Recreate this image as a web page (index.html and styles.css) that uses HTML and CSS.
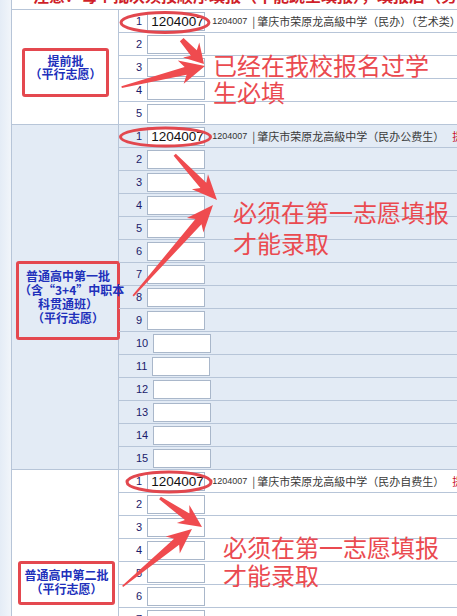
FILE: index.html
```html
<!DOCTYPE html>
<html lang="zh-CN">
<head>
<meta charset="utf-8">
<title>志愿填报</title>
<link rel="stylesheet" href="styles.css">
</head>
<body>
<div class="page">
  <div class="sheet">
    <div class="notice"><span class="notice-text">注意：每个批次须按顺序填报（不能跳空填报），填报后（务必点击保存）</span></div>

    <section class="batch">
      <div class="label"><div class="tag tag-1">提前批<br>（平行志愿）</div></div>
      <div class="rows">
        <div class="row"><span class="num">1</span><span class="box filled">1204007</span><span class="code">1204007</span><span class="school"><span class="bar">|</span>肇庆市荣原龙高級中学（民办）（艺术类）</span></div>
        <div class="row"><span class="num">2</span><span class="box"></span></div>
        <div class="row"><span class="num">3</span><span class="box"></span></div>
        <div class="row"><span class="num">4</span><span class="box"></span></div>
        <div class="row"><span class="num">5</span><span class="box"></span></div>
      </div>
    </section>

    <section class="batch batch-blue">
      <div class="label"><div class="tag tag-2">普通高中第一批<br>（含“3+4”中职本<br>科贯通班）<br>（平行志愿）</div></div>
      <div class="rows">
        <div class="row"><span class="num">1</span><span class="box filled">1204007</span><span class="code">1204007</span><span class="school"><span class="bar">|</span>肇庆市荣原龙高級中学（民办公费生）</span><span class="hint">提示</span></div>
        <div class="row"><span class="num">2</span><span class="box"></span></div>
        <div class="row"><span class="num">3</span><span class="box"></span></div>
        <div class="row"><span class="num">4</span><span class="box"></span></div>
        <div class="row"><span class="num">5</span><span class="box"></span></div>
        <div class="row"><span class="num">6</span><span class="box"></span></div>
        <div class="row"><span class="num">7</span><span class="box"></span></div>
        <div class="row"><span class="num">8</span><span class="box"></span></div>
        <div class="row"><span class="num">9</span><span class="box"></span></div>
        <div class="row"><span class="num">10</span><span class="box"></span></div>
        <div class="row"><span class="num">11</span><span class="box"></span></div>
        <div class="row"><span class="num">12</span><span class="box"></span></div>
        <div class="row"><span class="num">13</span><span class="box"></span></div>
        <div class="row"><span class="num">14</span><span class="box"></span></div>
        <div class="row"><span class="num">15</span><span class="box"></span></div>
      </div>
    </section>

    <section class="batch">
      <div class="label"><div class="tag tag-3">普通高中第二批<br>（平行志愿）</div></div>
      <div class="rows">
        <div class="row"><span class="num">1</span><span class="box filled">1204007</span><span class="code">1204007</span><span class="school"><span class="bar">|</span>肇庆市荣原龙高級中学（民办自费生）</span><span class="hint">提示</span></div>
        <div class="row"><span class="num">2</span><span class="box"></span></div>
        <div class="row"><span class="num">3</span><span class="box"></span></div>
        <div class="row"><span class="num">4</span><span class="box"></span></div>
        <div class="row"><span class="num">5</span><span class="box"></span></div>
        <div class="row"><span class="num">6</span><span class="box"></span></div>
        <div class="row"><span class="num">7</span><span class="box"></span></div>
        <div class="row"><span class="num">8</span><span class="box"></span></div>
        <div class="row"><span class="num">9</span><span class="box"></span></div>
        <div class="row"><span class="num">10</span><span class="box"></span></div>
      </div>
    </section>
  </div>

  <div class="note note-1">已经在我校报名过学<br>生必填</div>
  <div class="note note-2">必须在第一志愿填报<br>才能录取</div>
  <div class="note note-3">必须在第一志愿填报<br>才能录取</div>

  <svg class="marks" width="457" height="616" viewBox="0 0 457 616" xmlns="http://www.w3.org/2000/svg">
    <g fill="none" stroke="#e2474e" stroke-width="3">
      <ellipse cx="165" cy="22.5" rx="44" ry="10"/>
      <ellipse cx="165.5" cy="137" rx="45" ry="9"/>
      <ellipse cx="169" cy="482" rx="42" ry="10"/>
    </g>
    <g fill="#ef4b4f">
      <polygon transform="translate(204 64) rotate(47.5)" points="0,0 -19,-11 -15,-4 -33,-2.5 -33,2.5 -15,4 -19,11"/>
      <polygon transform="translate(205 66) rotate(-14.2)" points="0,0 -25,-12 -20,-4 -86,-1 -86,1 -20,4 -25,12"/>
      <polygon transform="translate(217 200) rotate(47)" points="0,0 -25,-11 -20,-4 -62,-1.5 -62,1.5 -20,4 -25,11"/>
      <polygon transform="translate(213 205) rotate(-48.7)" points="0,0 -27,-11 -22,-4 -121,-0.8 -121,0.8 -22,4 -27,11"/>
      <polygon transform="translate(202 527) rotate(34.6)" points="0,0 -23,-11 -18,-4 -51,-1.5 -51,1.5 -18,4 -23,11"/>
      <polygon transform="translate(192 529) rotate(-39.6)" points="0,0 -25,-11 -20,-4 -90,-0.8 -90,0.8 -20,4 -25,11"/>
    </g>
  </svg>
</div>
</body>
</html>
```

FILE: styles.css
```css
html, body {
  margin: 0;
  padding: 0;
}

body {
  font-family: "Liberation Sans", "Noto Sans CJK SC", sans-serif;
  background: #e9f0f8;
}

.page {
  position: relative;
  width: 457px;
  height: 616px;
  overflow: hidden;
  box-sizing: border-box;
  padding-left: 11px;
  background: linear-gradient(to right, #e4ecf6, #f1f5fa 11px, #f1f5fa);
}

.sheet {
  border-left: 1px solid #b7c5d8;
  background: #ffffff;
}

.notice {
  height: 9px;
  border-bottom: 1px solid #b7c5d8;
  overflow: hidden;
  white-space: nowrap;
  padding-left: 21px;
  background: #ffffff;
}

.notice-text {
  display: block;
  margin-top: -13px;
  font-family: "Noto Sans CJK SC", sans-serif;
  font-size: 16px;
  line-height: 16px;
  font-weight: 700;
  color: #cf1f2a;
}

.batch {
  display: flex;
  border-bottom: 1px solid #b7c5d8;
  background: #ffffff;
}

.batch-blue {
  background: #e3ebf5;
}

.label {
  width: 106px;
  flex: none;
  border-right: 1px solid #b7c5d8;
  display: flex;
  align-items: center;
  justify-content: center;
}

.tag {
  flex: none;
  box-sizing: border-box;
  border: 3px solid #e4484f;
  border-radius: 3px;
  font-family: "Noto Sans CJK SC", sans-serif;
  font-size: 12px;
  font-weight: 700;
  color: #2030bb;
  text-align: center;
  white-space: nowrap;
}

.tag-1 {
  width: 87px;
  padding: 3px 0 14px 0;
  line-height: 13px;
  margin-top: 11px;
  margin-left: 1px;
}

.tag-2 {
  width: 104px;
  padding: 5px 0 12px 0;
  line-height: 14px;
  margin-top: 7px;
  margin-left: 6px;
}

.tag-3 {
  width: 97px;
  padding: 4px 0 6px 0;
  line-height: 14px;
  margin-top: -4px;
  margin-left: 3px;
}

.rows {
  flex: 1;
  min-width: 0;
}

.row {
  height: 22px;
  display: flex;
  align-items: center;
  border-bottom: 1px solid #b7c5d8;
  white-space: nowrap;
  overflow: hidden;
}

.row:last-child {
  border-bottom: none;
}

.num {
  padding-left: 17px;
  margin-right: 5px;
  font-size: 11px;
  color: #1b1b6b;
}

.box {
  flex: none;
  box-sizing: border-box;
  width: 58px;
  height: 19px;
  border: 1px solid #a9b7ca;
  background: #ffffff;
}

.box.filled {
  padding-left: 3px;
  font-size: 13.5px;
  line-height: 17px;
  color: #111111;
}

.code {
  margin-left: 7px;
  font-size: 9px;
  color: #333333;
}

.school {
  margin-left: 5px;
  font-family: "Noto Sans CJK SC", sans-serif;
  font-size: 11px;
  color: #3a3a3a;
}

.bar {
  margin-right: 2px;
}

.hint {
  margin-left: 8px;
  font-family: "Noto Sans CJK SC", sans-serif;
  font-size: 11px;
  color: #c8102e;
}

.note {
  position: absolute;
  font-family: "Noto Sans CJK SC", sans-serif;
  font-size: 24px;
  color: #ea4a50;
  white-space: nowrap;
}

.note-1 {
  left: 213px;
  top: 51px;
  line-height: 27px;
}

.note-2 {
  left: 233px;
  top: 196px;
  line-height: 31px;
}

.note-3 {
  left: 223px;
  top: 533px;
  line-height: 28px;
}

.marks {
  position: absolute;
  left: 0;
  top: 0;
  pointer-events: none;
}
```
